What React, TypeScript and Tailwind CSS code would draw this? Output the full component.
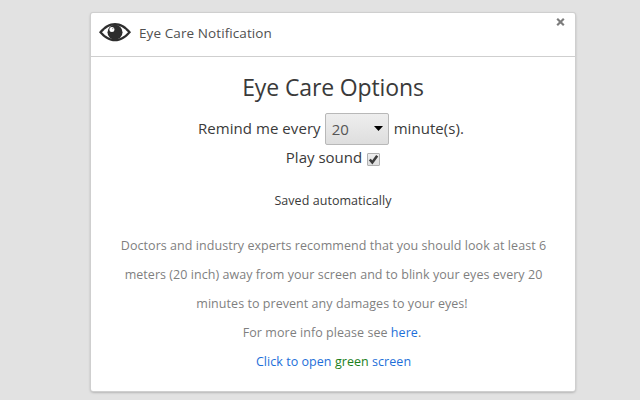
import React from "react";

function EyeIcon() {
  return (
    <svg className="h-[19px] w-8 shrink-0" viewBox="0 0 32 19">
      <path d="M0 9.200C5 3.200 10.500 .1 16 .1S27 3.200 32 9.200C27 15.200 21.500 18.300 16 18.300S5 15.200 0 9.200Z" fill="#2d2d2d" />
      <path d="M3 9.200C7 4.900 11.500 2.300 16 2.300S25 4.900 29 9.200C25 13.500 20.500 16.100 16 16.100S7 13.500 3 9.200Z" fill="#fff" />
      <circle cx="16" cy="9.200" r="7.500" fill="#2d2d2d" />
      <circle cx="12.900" cy="6.500" r="2.500" fill="#fff" />
      <circle cx="13.800" cy="5.600" r="0.700" fill="#8a8a8a" />
    </svg>
  );
}

export default function App() {
  return (
    <div className="h-[400px] w-[640px] overflow-hidden bg-[#e2e2e2] pt-[13px] pl-[91px] font-['Open_Sans','Noto_Sans',sans-serif] text-[#3a3a3a]">
      <main className="h-[378px] w-[484px] rounded-[2px] bg-white shadow-[0_0_0_1px_#cfcfcf,0_1px_3px_rgba(0,0,0,0.4)]">
        <header className="flex h-11 justify-between border-b border-[#cfcfcf]">
          <div className="flex h-[39px] items-center pl-2">
            <EyeIcon />
            <span className="mt-0.5 ml-2 whitespace-nowrap text-[13.5px] tracking-[0.09px] text-[#505050]">Eye Care Notification</span>
          </div>
          <button className="mt-[5px] mr-[10px] h-2 w-[9px]" aria-label="Close">
            <svg className="block h-2 w-[9px]" viewBox="0 0 9 8">
              <path d="M1.200 .8L7.800 7.200M7.800 .8L1.200 7.200" stroke="#7c7c7c" strokeWidth="2.200" />
            </svg>
          </button>
        </header>
        <section className="flex flex-col items-center whitespace-nowrap">
          <h1 className="mt-[14px] h-8 text-[23px] leading-8 tracking-[-0.13px]">Eye Care Options</h1>
          <div className="mt-[10px] mr-1 flex h-8 items-center text-[15px] tracking-[0.06px]">
            <span className="-mt-0.5">Remind me every</span>
            <div className="mr-[5px] ml-1 flex h-8 w-16 items-center justify-between rounded-[2px] border border-[#b8b8b8] bg-linear-to-b from-[#eeeeee] to-[#dedede] pr-[5px] pl-[6px] text-[#555]">
              <span>20</span>
              <svg className="mb-0.5 h-[5px] w-[9px]" viewBox="0 0 9 5">
                <path d="M0 0H9L4.500 5Z" fill="#000" />
              </svg>
            </div>
            <span className="-mt-0.5">minute(s).</span>
          </div>
          <div className="flex h-[26px] items-center text-[15px]">
            <span className="-mt-0.5">Play sound</span>
            <span className="mt-[3px] ml-[5px] h-[13px] w-[13px] rounded-[1px] border border-[#b0b0b0] bg-linear-to-b from-[#eeeeee] to-[#dedede]">
              <svg className="block h-[11px] w-[11px]" viewBox="0 0 11 11">
                <path d="M1.800 5.500L4.300 8.500L9.200 1.800" fill="none" stroke="#3c3c3c" strokeWidth="2.600" />
              </svg>
            </span>
          </div>
          <p className="mt-[15px] h-[29px] text-[12.5px] leading-[29px] tracking-[0.05px]">Saved automatically</p>
          <div className="mt-4 ml-px flex flex-col items-center text-[12.5px] leading-[29px] tracking-[0.05px] text-[#7f7f7f]">
            <p>Doctors and industry experts recommend that you should look at least 6</p>
            <p>meters (20 inch) away from your screen and to blink your eyes every 20</p>
            <p className="mr-[3px]">minutes to prevent any damages to your eyes!</p>
            <p className="mr-[3px]">For more info please see <a className="text-[#1e6fd9]">here</a>.</p>
            <p>
              <a className="text-[#1e6fd9]">Click to open <span className="text-[#1b801b]">green</span> screen</a>
            </p>
          </div>
        </section>
      </main>
    </div>
  );
}
